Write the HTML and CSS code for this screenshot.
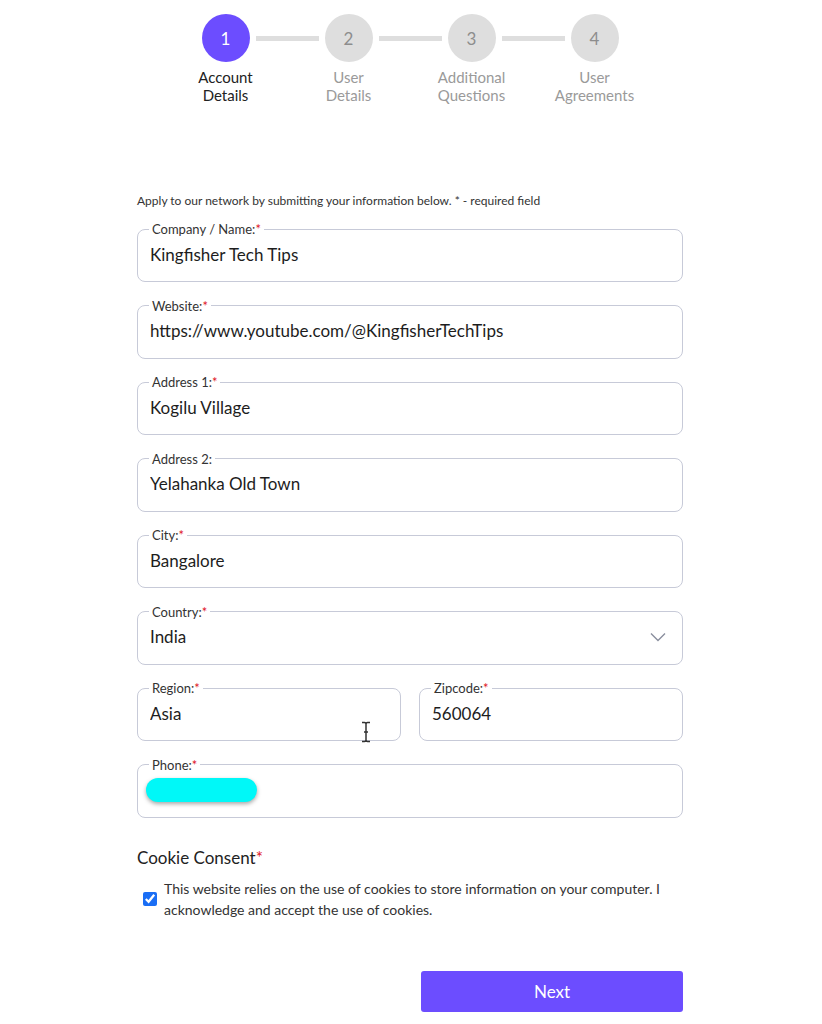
FILE: index.html
```html
<!DOCTYPE html>
<html lang="en">
<head>
  <meta charset="UTF-8">
  <meta name="viewport" content="width=device-width, initial-scale=1.0">
  <title>Apply - Account Details</title>
  <link rel="stylesheet" href="styles.css">
</head>
<body>
  <div class="page">

    <!-- Stepper -->
    <div class="stepper">
      <div class="step-dots">
        <span class="dot active">1</span>
        <span class="bar"></span>
        <span class="dot">2</span>
        <span class="bar"></span>
        <span class="dot">3</span>
        <span class="bar"></span>
        <span class="dot">4</span>
      </div>
      <div class="step-labels">
        <span class="step-label active">Account<br>Details</span>
        <span class="step-label">User<br>Details</span>
        <span class="step-label">Additional<br>Questions</span>
        <span class="step-label">User<br>Agreements</span>
      </div>
    </div>

    <p class="intro">Apply to our network by submitting your information below. * - required field</p>

    <form class="form">
      <fieldset class="field">
        <legend>Company / Name:<span class="req">*</span></legend>
        <input type="text" value="Kingfisher Tech Tips">
      </fieldset>

      <fieldset class="field">
        <legend>Website:<span class="req">*</span></legend>
        <input type="text" value="https://www.youtube.com/@KingfisherTechTips">
      </fieldset>

      <fieldset class="field">
        <legend>Address 1:<span class="req">*</span></legend>
        <input type="text" value="Kogilu Village">
      </fieldset>

      <fieldset class="field">
        <legend>Address 2:</legend>
        <input type="text" value="Yelahanka Old Town">
      </fieldset>

      <fieldset class="field">
        <legend>City:<span class="req">*</span></legend>
        <input type="text" value="Bangalore">
      </fieldset>

      <fieldset class="field">
        <legend>Country:<span class="req">*</span></legend>
        <div class="select-wrap">
          <select>
            <option>India</option>
          </select>
          <svg class="chevron" width="16" height="10" viewBox="0 0 16 10">
            <path d="M1 1.5 L8 8.5 L15 1.5" fill="none" stroke="#8a8f9e" stroke-width="1.4"/>
          </svg>
        </div>
      </fieldset>

      <div class="row">
        <fieldset class="field cursor-host">
          <legend>Region:<span class="req">*</span></legend>
          <input type="text" value="Asia">
          <svg class="ibeam" width="10" height="22" viewBox="0 0 10 22">
            <path d="M1 1.5 H3.5 Q5 1.5 5 3 V19 Q5 20.5 3.5 20.5 H1 M9 1.5 H6.5 Q5 1.5 5 3 M5 19 Q5 20.5 6.5 20.5 H9 M3 11 H7" fill="none" stroke="#333" stroke-width="1.5"/>
          </svg>
        </fieldset>
        <fieldset class="field">
          <legend>Zipcode:<span class="req">*</span></legend>
          <input type="text" value="560064">
        </fieldset>
      </div>

      <fieldset class="field">
        <legend>Phone:<span class="req">*</span></legend>
        <div class="phone-value"><span class="redact"></span></div>
      </fieldset>

      <h3 class="consent-title">Cookie Consent<span class="req">*</span></h3>
      <label class="consent">
        <input type="checkbox" checked>
        <span>This website relies on the use of cookies to store information on your computer. I acknowledge and accept the use of cookies.</span>
      </label>

      <div class="actions">
        <button type="button" class="next">Next</button>
      </div>
    </form>
  </div>
</body>
</html>
```

FILE: styles.css
```css
body {
  font-family: 'Lato', 'Noto Sans', sans-serif;
  background: #fff;
  color: #222;
  margin: 0;
  padding: 0 2px 0 0;
}

.page {
  width: 546px;
  margin: 0 auto;
  padding-top: 14px;
}

/* stepper */
.stepper {
  display: flex;
  flex-direction: column;
  align-items: center;
}

.step-dots {
  display: flex;
  align-items: center;
}

.dot {
  width: 48px;
  height: 48px;
  border-radius: 50%;
  background: #dedede;
  color: #8d8d8d;
  font-size: 17px;
  display: flex;
  align-items: center;
  justify-content: center;
}

.dot.active {
  background: #6c4dff;
  color: #fff;
}

.bar {
  width: 63px;
  height: 5px;
  margin: 0 6px;
  background: #dedede;
}

.step-labels {
  display: flex;
  margin-top: 6px;
}

.step-label {
  width: 123px;
  text-align: center;
  font-size: 15px;
  line-height: 18px;
  color: #9a9a9a;
}

.step-label.active {
  color: #222;
}

.intro {
  font-size: 12px;
  line-height: 14px;
  color: #333;
  margin: 90px 0 13px;
}

/* fields */
.form {
  display: flex;
  flex-direction: column;
  gap: 15.5px;
}

.field {
  margin: 0;
  padding: 0 12px 10px;
  border: 1px solid #c7cad8;
  border-radius: 8px;
  min-width: 0;
}

.field legend {
  font-size: 13px;
  line-height: 16px;
  color: #333;
  padding: 0 3px;
  margin-left: -1px;
}

.req {
  color: #e0141e;
}

.field input[type="text"],
.field select {
  width: 100%;
  height: 34px;
  border: none;
  outline: none;
  padding: 0;
  font-family: inherit;
  font-size: 17px;
  color: #1d1d1d;
  background: transparent;
}

.select-wrap {
  display: flex;
  align-items: center;
}

.select-wrap select {
  appearance: none;
  -webkit-appearance: none;
  flex: 1;
}

.chevron {
  margin-right: 4px;
}

.row {
  display: grid;
  grid-template-columns: 1fr 1fr;
  gap: 18px;
}

.cursor-host {
  position: relative;
}

.ibeam {
  position: absolute;
  left: 223px;
  top: 25px;
}

.phone-value {
  height: 34px;
  display: flex;
  align-items: center;
  margin-left: -4px;
}

.redact {
  display: inline-block;
  width: 111px;
  height: 24px;
  border-radius: 12px;
  background: #00f8f8;
  box-shadow: 0 2px 4px rgba(0, 0, 0, 0.35);
}

/* consent */
.consent-title {
  font-size: 17px;
  font-weight: normal;
  line-height: 22px;
  color: #222;
  margin: 13.5px 0 0;
}

.consent {
  display: flex;
  align-items: center;
  gap: 7px;
  font-size: 14px;
  line-height: 21px;
  color: #333;
  margin-top: -6px;
  padding-left: 6px;
}

.consent input {
  width: 14px;
  height: 14px;
  margin: 0;
  flex: none;
  accent-color: #1a6ef5;
}

.actions {
  display: flex;
  justify-content: flex-end;
  margin-top: 35px;
}

.next {
  width: 262px;
  height: 41px;
  border: none;
  border-radius: 3px;
  background: #6c4dff;
  color: #fff;
  font-family: inherit;
  font-size: 17px;
  cursor: pointer;
}
```
